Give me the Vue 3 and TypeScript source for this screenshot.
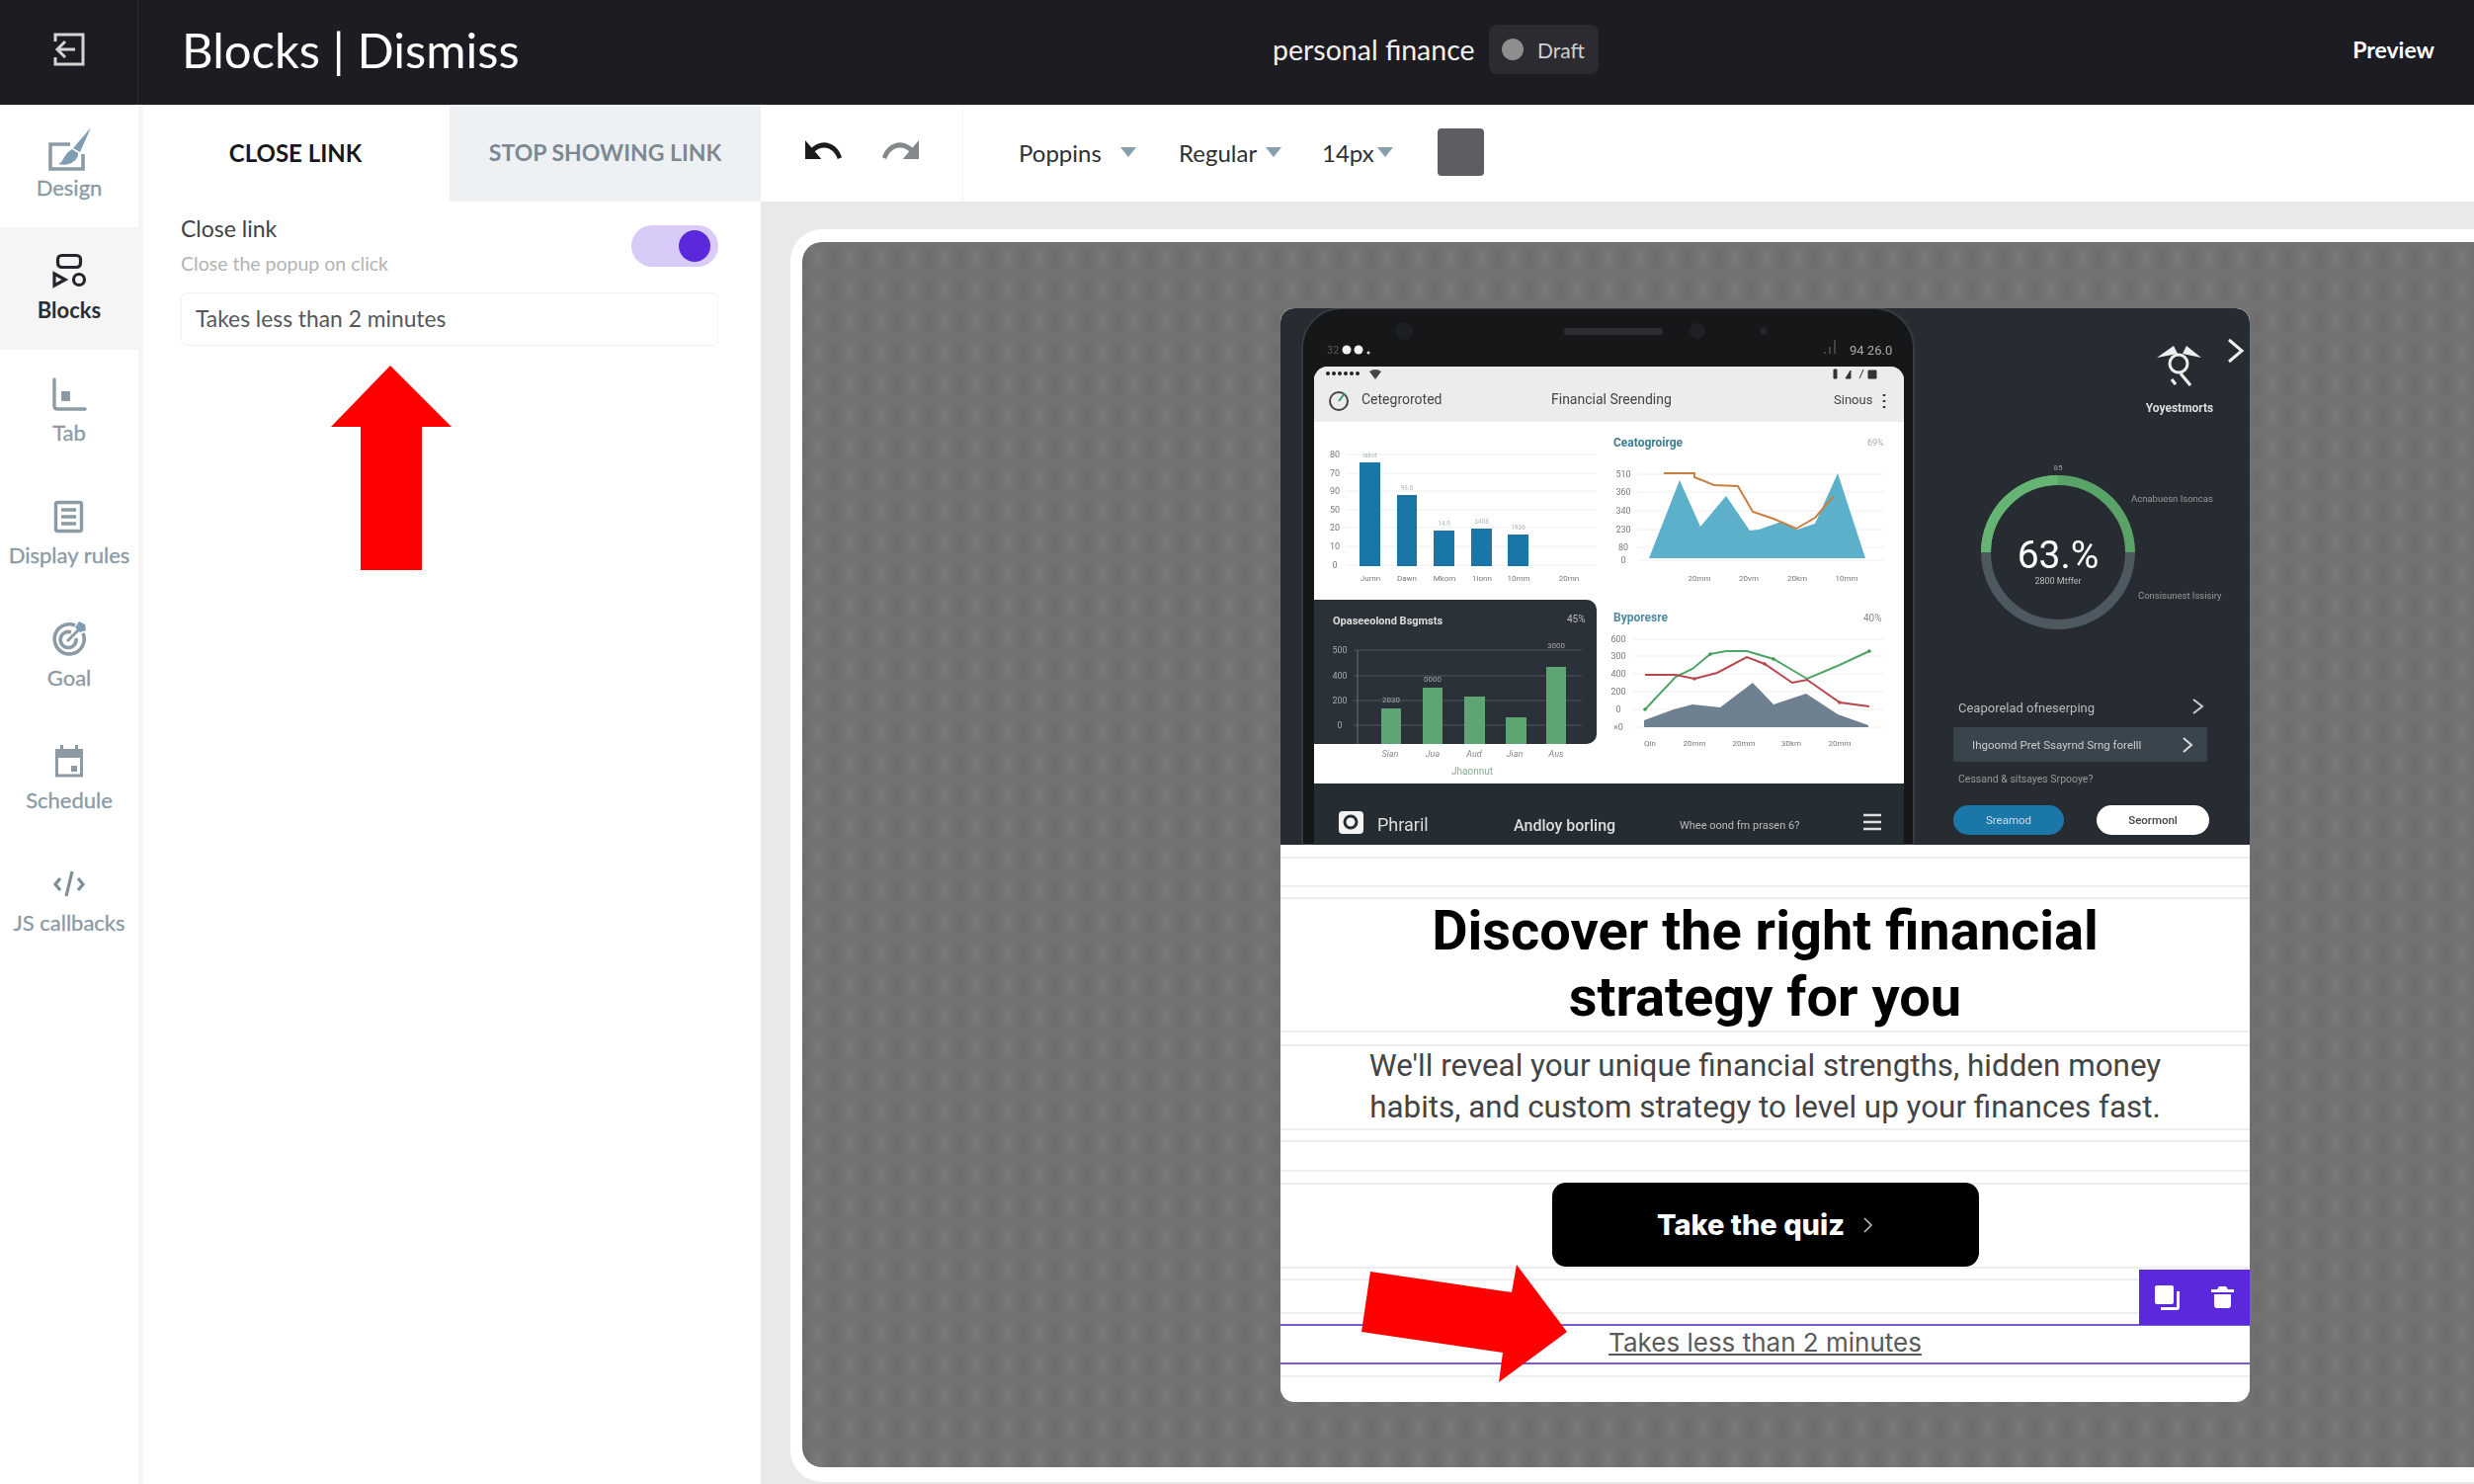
<script setup lang="ts">
interface NavItem {
  key: string;
  label: string;
}

const navItems: NavItem[] = [
  { key: "design", label: "Design" },
  { key: "blocks", label: "Blocks" },
  { key: "tab", label: "Tab" },
  { key: "rules", label: "Display rules" },
  { key: "goal", label: "Goal" },
  { key: "schedule", label: "Schedule" },
  { key: "js", label: "JS callbacks" },
];

const toolbarSelects = [
  { label: "Poppins", textWidth: 103, width: 162 },
  { label: "Regular", textWidth: 88, width: 145 },
  { label: "14px", textWidth: 56, width: 117 },
];

// Chart data is in the illustration's own coordinates
const blueBars = [
  { x: 80, top: 156, w: 21, note: "Iakot" },
  { x: 118, top: 189, w: 20, note: "98.0" },
  { x: 155, top: 225, w: 21, note: "14.9" },
  { x: 193, top: 223, w: 21, note: "3408" },
  { x: 230, top: 229, w: 21, note: "1936" },
];
const greenBars = [
  { x: 102, top: 405, w: 20 },
  { x: 144, top: 384, w: 20 },
  { x: 186, top: 393, w: 21 },
  { x: 228, top: 414, w: 21 },
  { x: 269, top: 363, w: 20 },
];
const blueTicks = [
  { t: "80", y: 148 },
  { t: "70", y: 167 },
  { t: "90", y: 185 },
  { t: "50", y: 204 },
  { t: "20", y: 222 },
  { t: "10", y: 241 },
  { t: "0", y: 260 },
];
const areaTicks = [
  { t: "510", y: 168 },
  { t: "360", y: 186 },
  { t: "340", y: 205 },
  { t: "230", y: 224 },
  { t: "80", y: 242 },
  { t: "0", y: 255 },
];
const lineTicks = [
  { t: "600", y: 335 },
  { t: "300", y: 352 },
  { t: "400", y: 370 },
  { t: "200", y: 388 },
  { t: "0", y: 406 },
  { t: "×0", y: 424 },
];
const redPoints = "369,371 400,371 419,375 442,369 472,353 490,360 518,379 533,376 566,399 596,403";
const greenPoints = "369,406 400,373 417,365 435,350 451,347 472,347 499,355 533,375 566,361 596,347";
const orangePoints = "388,167 419,167 419,171 439,179 463,180 478,206 499,213 522,223 541,212 560,190";

const toDots = (points: string) =>
  points.split(" ").map((p) => {
    const [cx, cy] = p.split(",").map(Number);
    return { cx, cy };
  });
</script>

<template>
  <div class="app">
    <header class="topbar">
      <div class="back">
        <svg width="34" height="34" viewBox="0 0 34 34" fill="none" stroke="#d4d4d4" stroke-width="3">
          <path d="M3 9V2h28v30H3v-7" />
          <path d="M23 17H6M13 9l-8 8 8 8" />
        </svg>
      </div>
      <h1 class="title">Blocks | Dismiss</h1>
      <span class="project">personal finance</span>
      <span class="draft"><i class="draft-dot"></i>Draft</span>
      <span class="preview">Preview</span>
    </header>

    <div class="main">
      <nav class="sidebar">
        <div v-for="item in navItems" :key="item.key" class="nav-item" :class="{ active: item.key === 'blocks' }">
          <svg v-if="item.key === 'design'" class="nav-icon" viewBox="0 0 44 44">
            <path d="M23 17H3v25h33V27" fill="none" stroke="#8c9aa4" stroke-width="3.6" />
            <path d="M44 0 33 25l-7-4z" fill="#7f9db3" />
            <path d="M11 37c5-1 5-10 14-15l6 4c1 7-9 14-20 11z" fill="#7f9db3" />
          </svg>
          <svg v-else-if="item.key === 'blocks'" class="nav-icon" viewBox="0 0 44 44" fill="none" stroke="#23262b" stroke-width="3.2">
            <rect x="10.5" y="5.5" width="23" height="12" rx="4" />
            <path d="M7 24v12l11-6z" />
            <circle cx="32" cy="30" r="5.5" />
          </svg>
          <svg v-else-if="item.key === 'tab'" class="nav-icon" viewBox="0 0 44 44">
            <path d="M7 7v27c0 2 1 3 3 3h28" fill="none" stroke="#8c9aa4" stroke-width="3.4" stroke-linecap="round" />
            <rect x="14" y="19" width="9" height="10" rx="1" fill="#8c9aa4" />
          </svg>
          <svg v-else-if="item.key === 'rules'" class="nav-icon" viewBox="0 0 44 44" fill="none" stroke="#8c9aa4" stroke-width="3.4">
            <rect x="8.5" y="7.5" width="26" height="29" rx="2" />
            <path d="M14 15h15M14 22h15M14 29h15" />
          </svg>
          <svg v-else-if="item.key === 'goal'" class="nav-icon" viewBox="0 0 44 44" fill="none" stroke="#8c9aa4" stroke-width="3.6">
            <path d="M28 8a15 15 0 1 0 8 8" />
            <path d="M24 15a8 8 0 1 0 5 6" />
            <path d="M20 24 32 12" stroke-width="3" />
            <path d="m32 4 6 3 1 6-6 2-5-5z" fill="#7f9db3" stroke="none" />
          </svg>
          <svg v-else-if="item.key === 'schedule'" class="nav-icon" viewBox="0 0 44 44">
            <path d="M13 5h3v4h12V5h3v4h5v9H8V9h5z" fill="#8c9aa4" />
            <path d="M9.5 15v21h25V15" fill="none" stroke="#8c9aa4" stroke-width="3" />
            <rect x="24" y="26" width="6" height="6" fill="#8c9aa4" />
          </svg>
          <svg v-else class="nav-icon" viewBox="0 0 44 44" fill="none" stroke="#7e8e99" stroke-width="3.2">
            <path d="m13 16-5 6 5 6M31 16l5 6-5 6M25 9l-6 25" />
          </svg>
          <span class="nav-label">{{ item.label }}</span>
        </div>
      </nav>

      <section class="panel">
        <div class="tabs">
          <div class="tab current">CLOSE LINK</div>
          <div class="tab">STOP SHOWING LINK</div>
        </div>
        <div class="panel-body">
          <div class="field-head">
            <div>
              <div class="field-title">Close link</div>
              <div class="field-hint">Close the popup on click</div>
            </div>
            <div class="toggle"><i class="knob"></i></div>
          </div>
          <div class="text-input"><span>Takes less than 2 minutes</span></div>
        </div>
      </section>

      <section class="workspace">
        <div class="toolbar">
          <div class="history">
            <svg class="hist-icon" viewBox="2 6 21 11" preserveAspectRatio="none">
              <path d="M12.5 8c-2.65 0-5.05.99-6.9 2.6L2 7v9h9l-3.62-3.62c1.39-1.16 3.16-1.88 5.12-1.88 3.54 0 6.55 2.31 7.6 5.5l2.37-.78C21.08 11.03 17.15 8 12.5 8z" fill="#1c1c1f" />
            </svg>
            <svg class="hist-icon" viewBox="2 6 21 11" preserveAspectRatio="none">
              <path d="M12.5 8c2.65 0 5.05.99 6.9 2.6L23 7v9h-9l3.62-3.62C16.23 11.22 14.46 10.5 12.5 10.5c-3.54 0-6.55 2.31-7.6 5.5l-2.37-.78C3.92 11.03 7.85 8 12.5 8z" fill="#85888b" />
            </svg>
          </div>
          <div class="format">
            <div v-for="sel in toolbarSelects" :key="sel.label" class="select" :style="{ width: sel.width + 'px' }">
              <span :style="{ width: sel.textWidth + 'px' }">{{ sel.label }}</span>
              <i class="caret"></i>
            </div>
            <div class="swatch"></div>
          </div>
        </div>

        <div class="canvas">
          <div class="frame">
            <div class="stage">
              <div class="popup">
                <svg class="shot" viewBox="0 0 981 543" width="981" height="543">
                  <g class="blurred">
                    <path d="M0 14a14 14 0 0 1 14-14h953a14 14 0 0 1 14 14v529H0z" fill="#272c33" />
                    <path d="M22 543V40A40 40 0 0 1 62 0h539a40 40 0 0 1 40 40v503z" fill="#151719" stroke="#363b3f" stroke-width="2" />
                    <circle cx="125" cy="23" r="9" fill="#1d2022" />
                    <rect x="287" y="20" width="100" height="7" rx="3" fill="#2c2e31" />
                    <circle cx="422" cy="23" r="8" fill="#1f2124" />
                    <circle cx="489" cy="23" r="4" fill="#222427" />
                    <text x="47" y="46" class="t" font-size="11" fill="#555">32</text>
                    <circle cx="67" cy="42" r="4.5" fill="#f2f2f2" />
                    <circle cx="79" cy="42" r="4.5" fill="#f2f2f2" />
                    <circle cx="89" cy="45" r="1.5" fill="#ddd" />
                    <path d="M550 46h2v-2h-2zM555 46h2v-7h-2zM560 46h2V32h-2z" fill="#444" />
                    <text x="576" y="47" class="t" font-size="13" fill="#aaa">94 26.0</text>

                    <!-- phone screen -->
                    <path d="M34 73a14 14 0 0 1 14-14h569a14 14 0 0 1 14 14v408H34z" fill="#fff" />
                    <path d="M34 73a14 14 0 0 1 14-14h569a14 14 0 0 1 14 14v42H34z" fill="#ececec" />
                    <circle v-for="n in 6" :key="n" :cx="42 + n * 6" cy="66" r="2" fill="#222" />
                    <path d="M90 64q6-4 12 0l-6 8z" fill="#444" />
                    <path d="M560 62h3v9h-3zM572 71l5-8v8zM586 71l4-9M595 63h8v8h-8z" fill="#333" stroke="#333" />
                    <circle cx="59" cy="94" r="9" fill="none" stroke="#444" stroke-width="2" />
                    <path d="M59 94l6-8" stroke="#3a9a6c" stroke-width="2" />
                    <text x="82" y="97" class="t" font-size="14" fill="#444">Cetegroroted</text>
                    <text x="274" y="97" class="t" font-size="14" fill="#444">Financial Sreending</text>
                    <text x="560" y="97" class="t" font-size="13" fill="#444">Sinous</text>
                    <path d="M611 87v2M611 93v2M611 99v2" stroke="#333" stroke-width="2.5" />

                    <!-- blue bars -->
                    <g v-for="tick in blueTicks" :key="tick.t + tick.y">
                      <text x="55" :y="tick.y + 3" class="t" text-anchor="middle" font-size="9" fill="#777">{{ tick.t }}</text>
                      <line x1="66" x2="320" :y1="tick.y" :y2="tick.y" stroke="#eee" />
                    </g>
                    <g v-for="bar in blueBars" :key="bar.x">
                      <rect :x="bar.x" :y="bar.top" :width="bar.w" :height="261 - bar.top" fill="#1a76a6" />
                      <text :x="bar.x + bar.w / 2" :y="bar.top - 5" class="t" text-anchor="middle" font-size="6.5" fill="#a9b9c0">{{ bar.note }}</text>
                    </g>
                    <text v-for="(x, i) in [91, 128, 166, 204, 241, 292]" :key="x" :x="x" y="276" class="t" text-anchor="middle" font-size="8" fill="#777">{{ ["Jumn", "Dawn", "Mkom", "1ionn", "10mm", "20mn"][i] }}</text>

                    <!-- area chart -->
                    <text x="337" y="140" class="t" font-size="12" font-weight="700" fill="#3e7d94">Ceatogroirge</text>
                    <text x="594" y="139" class="t" font-size="9" fill="#aaa">69%</text>
                    <g v-for="tick in areaTicks" :key="tick.t">
                      <text x="347" :y="tick.y + 3" class="t" text-anchor="middle" font-size="9" fill="#777">{{ tick.t }}</text>
                      <line x1="362" x2="611" :y1="tick.y" :y2="tick.y" stroke="#eee" />
                    </g>
                    <polygon points="373,253 404,174 425,221 451,190 475,225 484,224 507,216 523,224 541,218 564,167 592,253" fill="#5cb0ca" />
                    <polyline :points="orangePoints" fill="none" stroke="#c9803f" stroke-width="2" />
                    <text v-for="(x, i) in [424, 474, 523, 573]" :key="x" :x="x" y="276" class="t" text-anchor="middle" font-size="8" fill="#777">{{ ["20mm", "20vm", "20km", "10mm"][i] }}</text>

                    <!-- dark card -->
                    <path d="M34 295h276a10 10 0 0 1 10 10v126a10 10 0 0 1-10 10H34z" fill="#2a3138" />
                    <text x="53" y="320" class="t" font-size="11" font-weight="700" fill="#ddd">Opaseeolond Bsgmsts</text>
                    <text x="290" y="318" class="t" font-size="10" fill="#bbb">45%</text>
                    <line v-for="y in [346, 372, 397, 422]" :key="y" x1="74" x2="305" :y1="y" :y2="y" stroke="#4e565d" />
                    <line x1="78" x2="78" y1="346" y2="441" stroke="#6a7279" />
                    <text v-for="(y, i) in [346, 372, 397, 422]" :key="'t' + y" x="60" :y="y + 3" class="t" text-anchor="middle" font-size="9" fill="#aaa">{{ ["500", "400", "200", "0"][i] }}</text>
                    <rect v-for="bar in greenBars" :key="bar.x" :x="bar.x" :y="bar.top" :width="bar.w" :height="441 - bar.top" fill="#5fa573" />
                    <text x="112" y="399" class="t" text-anchor="middle" font-size="8" fill="#aaa">2030</text>
                    <text x="154" y="378" class="t" text-anchor="middle" font-size="8" fill="#aaa">0000</text>
                    <text x="279" y="344" class="t" text-anchor="middle" font-size="8" fill="#aaa">3000</text>
                    <text v-for="(x, i) in [111, 154, 196, 237, 279]" :key="x" :x="x" y="454" class="t" text-anchor="middle" font-size="9" font-style="italic" fill="#888">{{ ["Sian", "Jua", "Aud", "Jian", "Aus"][i] }}</text>
                    <text x="194" y="472" class="t" text-anchor="middle" font-size="10" fill="#7fb08f">Jhaonnut</text>

                    <!-- line chart -->
                    <text x="337" y="317" class="t" font-size="12" font-weight="700" fill="#4f8aa2">Byporesre</text>
                    <text x="590" y="317" class="t" font-size="10" fill="#888">40%</text>
                    <g v-for="tick in lineTicks" :key="tick.t">
                      <text x="342" :y="tick.y + 3" class="t" text-anchor="middle" font-size="9" fill="#777">{{ tick.t }}</text>
                      <line x1="356" x2="611" :y1="tick.y" :y2="tick.y" stroke="#f0f0f0" />
                    </g>
                    <polygon points="368,417 398,406 417,401 445,404 478,379 499,401 532,390 564,411 595,422 595,424 368,424" fill="#6f8090" />
                    <polyline :points="greenPoints" fill="none" stroke="#4fa565" stroke-width="2" />
                    <polyline :points="redPoints" fill="none" stroke="#b9454f" stroke-width="2" />
                    <circle v-for="d in toDots(greenPoints).filter((_, i) => i % 3 === 0)" :key="'g' + d.cx" :cx="d.cx" :cy="d.cy" r="1.8" fill="#3f9a58" />
                    <circle v-for="d in toDots(redPoints).filter((_, i) => i % 3 === 2)" :key="'r' + d.cx" :cx="d.cx" :cy="d.cy" r="1.8" fill="#b9454f" />
                    <text v-for="(x, i) in [374, 419, 469, 517, 566]" :key="x" :x="x" y="443" class="t" text-anchor="middle" font-size="8" fill="#777">{{ ["Qin", "20mm", "20mm", "30km", "20mm"][i] }}</text>

                    <!-- phone bottom bar -->
                    <rect x="34" y="481" width="597" height="62" fill="#252c32" />
                    <rect x="59" y="509" width="25" height="23" rx="4" fill="#f4f4f4" />
                    <circle cx="71" cy="520" r="6" fill="none" stroke="#252c32" stroke-width="3" />
                    <text x="98" y="529" class="t" font-size="18" fill="#ddd">Phraril</text>
                    <text x="236" y="529" class="t" font-size="16" font-weight="500" fill="#ddd">Andloy borling</text>
                    <text x="404" y="527" class="t" font-size="11" fill="#bbb">Whee oond fm prasen 6?</text>
                    <path d="M590 513h18M590 520h18M590 527h18" stroke="#ddd" stroke-width="2.5" />

                    <!-- right side panel -->
                    <path d="M960 32l13 11-13 11" fill="none" stroke="#f0f0f0" stroke-width="3" />
                    <circle cx="909" cy="56" r="9" fill="none" stroke="#eee" stroke-width="3" />
                    <path d="M887 50l17-12 4 8zM932 50l-15-12-4 8z" fill="#eee" />
                    <path d="M911 66l10 12M902 72l4 5" stroke="#eee" stroke-width="3.2" />
                    <text x="910" y="105" class="t" text-anchor="middle" font-size="12" font-weight="700" fill="#ddd">Yoyestmorts</text>
                    <path d="M714 247a73 73 0 0 1 146 0" fill="none" stroke="#5aa368" stroke-width="10" />
                    <path d="M714 247a73 73 0 0 1 73-73" fill="none" stroke="#65b473" stroke-width="10" />
                    <path d="M714 247a73 73 0 0 0 146 0" fill="none" stroke="#4d5860" stroke-width="10" />
                    <text x="787" y="263" class="t" text-anchor="middle" font-size="39" fill="#fff">63.%</text>
                    <text x="787" y="279" class="t" text-anchor="middle" font-size="9" fill="#bbb">2800 Mtffer</text>
                    <text x="787" y="164" class="t" text-anchor="middle" font-size="8" fill="#999">85</text>
                    <text x="861" y="196" class="t" font-size="9.5" fill="#999">Acnabuesn Isoncas</text>
                    <text x="868" y="294" class="t" font-size="9.5" fill="#999">Consisunest Issisiry</text>
                    <text x="686" y="409" class="t" font-size="13" fill="#bbb">Ceaporelad ofneserping</text>
                    <path d="M924 396l9 7-9 7" fill="none" stroke="#ccc" stroke-width="2" />
                    <rect x="681" y="424" width="257" height="35" rx="2" fill="#3a444c" />
                    <text x="700" y="446" class="t" font-size="11.5" fill="#ccc">Ihgoomd Pret Ssayrnd Srng forelll</text>
                    <path d="M914 435l8 7-8 7" fill="none" stroke="#ddd" stroke-width="2" />
                    <text x="686" y="480" class="t" font-size="10.5" fill="#999">Cessand &amp; sitsayes Srpooye?</text>
                    <rect x="681" y="503" width="112" height="30" rx="15" fill="#1b77a8" />
                    <text x="737" y="522" class="t" text-anchor="middle" font-size="11.5" fill="#cde">Sreamod</text>
                    <rect x="826" y="503" width="114" height="30" rx="15" fill="#fff" />
                    <text x="883" y="522" class="t" text-anchor="middle" font-size="11.5" font-weight="500" fill="#444">Seormonl</text>
                  </g>
                </svg>

                <div class="blocks">
                  <div class="guide b-top"></div>
                  <div class="guide b-heading">
                    <h2 class="headline">Discover the right financial<br />strategy for you</h2>
                  </div>
                  <div class="guide b-desc">
                    <p class="copy">We'll reveal your unique financial strengths, hidden money<br />habits, and custom strategy to level up your finances fast.</p>
                  </div>
                  <div class="guide b-gap"></div>
                  <div class="guide b-cta">
                    <div class="cta">
                      <span>Take the quiz</span>
                      <svg width="11" height="20" viewBox="0 0 11 20" fill="none" stroke="#bbb" stroke-width="1.6"><path d="M2 3l7 7-7 7" /></svg>
                    </div>
                  </div>
                  <div class="guide b-gap2"></div>
                  <div class="b-link"><span class="link-text">Takes less than 2 minutes</span></div>
                  <div class="b-end"></div>
                </div>

                <div class="block-tools">
                  <svg width="26" height="25" viewBox="0 0 26 25" fill="#fff">
                    <rect x="0" y="0" width="19" height="19" rx="2" />
                    <path d="M22 6h3v16c0 2-1 3-3 3H6v-3h16z" />
                  </svg>
                  <svg width="23" height="22" viewBox="0 0 23 22" fill="#fff">
                    <path d="M8 0h7l2 3h6v3H0V3h6zM3 8h17v11c0 2-1 3-3 3H6c-2 0-3-1-3-3z" />
                  </svg>
                </div>
              </div>
            </div>
          </div>
        </div>
      </section>

      <!-- red callouts drawn on top of the capture -->
      <svg class="callouts" viewBox="0 0 2504 1396" width="2504" height="1396">
        <polygon points="395,264 335,326 365,326 365,471 427,471 427,326 457,326" fill="#fe0000" />
        <polygon points="1387,1181 1530,1202 1535,1174 1586,1242 1517,1293 1521,1263 1378,1242" fill="#fe0000" />
      </svg>
    </div>
  </div>
</template>

<style scoped>
.app {
  width: 2504px;
  height: 1502px;
  overflow: hidden;
  display: flex;
  flex-direction: column;
  font-family: "Lato", "Open Sans", sans-serif;
  background: #fff;
}

.topbar {
  height: 106px;
  flex: none;
  display: flex;
  align-items: center;
  background: #1c1c22;
  color: #fff;
}

.back {
  width: 140px;
  height: 106px;
  display: flex;
  align-items: center;
  justify-content: center;
  border-right: 1px solid #2a2a30;
  box-sizing: border-box;
  padding-bottom: 6px;
}

.title {
  margin: 0 0 6px 44px;
  width: 1104px;
  font-size: 49px;
  font-weight: 400;
  white-space: nowrap;
}

.project {
  margin-bottom: 6px;
  font-size: 28.5px;
  color: #f1f1f1;
  width: 219px;
  white-space: nowrap;
}

.draft {
  display: flex;
  align-items: center;
  height: 50px;
  width: 111px;
  padding-left: 13px;
  box-sizing: border-box;
  margin-bottom: 6px;
  border-radius: 8px;
  background: #2b2b31;
  font-size: 21px;
  color: #d0d0d0;
}

.draft-dot {
  width: 22px;
  height: 22px;
  border-radius: 50%;
  background: #8e8e8e;
  margin-right: 14px;
}

.preview {
  margin-left: auto;
  margin-right: 40px;
  font-size: 23px;
  font-weight: 700;
  margin-bottom: 6px;
}

.main {
  flex: 1;
  display: flex;
  position: relative;
  min-height: 0;
}

.sidebar {
  width: 145px;
  flex: none;
  box-sizing: border-box;
  border-right: 5px solid #f5f5f5;
}

.nav-item {
  height: 124px;
  display: flex;
  flex-direction: column;
  align-items: center;
  padding-top: 23px;
  box-sizing: border-box;
  color: #8a9aa5;
}

.nav-icon {
  width: 44px;
  height: 44px;
}

.nav-label {
  margin-top: 5px;
  font-size: 22px;
  line-height: 24px;
  white-space: nowrap;
  -webkit-text-stroke: 0.3px currentColor;
}

.nav-item.active {
  background: #f5f5f5;
  color: #2a2d31;
  font-weight: 700;
}

.nav-item.active .nav-label {
  -webkit-text-stroke: 0;
}

.panel {
  width: 625px;
  flex: none;
  background: #fff;
}

.tabs {
  display: flex;
  height: 98px;
}

.tab {
  width: 315px;
  padding-bottom: 2px;
  box-sizing: border-box;
  display: flex;
  align-items: center;
  justify-content: center;
  background: #edf1f3;
  color: #7d8992;
  font-size: 23px;
  font-weight: 700;
  white-space: nowrap;
}

.tab.current {
  width: 310px;
  padding-right: 2px;
  background: #fff;
  color: #17181b;
  font-size: 24px;
}

.panel-body {
  padding: 12px 43px 0 38px;
}

.field-head {
  display: flex;
  justify-content: space-between;
  align-items: flex-start;
}

.field-title {
  font-size: 23px;
  line-height: 30px;
  color: #404346;
}

.field-hint {
  margin-top: 8px;
  font-size: 19.5px;
  line-height: 26px;
  color: #b3b3b3;
}

.toggle {
  width: 88px;
  height: 42px;
  margin-top: 12px;
  border-radius: 21px;
  background: #d9cbf8;
  position: relative;
}

.knob {
  position: absolute;
  top: 5px;
  right: 8px;
  width: 32px;
  height: 32px;
  border-radius: 50%;
  background: #5b28dc;
}

.text-input {
  margin-top: 16px;
  height: 54px;
  box-sizing: border-box;
  padding: 0 0 3px 14px;
  display: flex;
  align-items: center;
  border: 1px solid #f2f2f2;
  border-radius: 6px;
  font-size: 22.8px;
  color: #55585b;
}

.workspace {
  flex: 1;
  min-width: 0;
  display: flex;
  flex-direction: column;
}

.toolbar {
  height: 98px;
  flex: none;
  display: flex;
  background: #fff;
}

.history {
  width: 205px;
  box-sizing: border-box;
  display: flex;
  gap: 39px;
  padding: 34px 0 0 45px;
  border-right: 1px solid #f3f3f3;
}

.hist-icon {
  width: 38px;
  height: 23px;
}

.format {
  display: flex;
  align-items: center;
  padding: 0 0 2px 56px;
}

.select {
  display: flex;
  align-items: center;
  font-size: 24px;
  color: #2e3033;
}

.select span {
  white-space: nowrap;
}

.caret {
  width: 0;
  height: 0;
  border-left: 8px solid transparent;
  border-right: 8px solid transparent;
  border-top: 10px solid #85a0ad;
}

.swatch {
  width: 47px;
  height: 48px;
  border-radius: 4px;
  background: #5e5e62;
}

.canvas {
  flex: 1;
  min-height: 0;
  display: flex;
  padding: 28px 0 2px 30px;
  background: #e9e9e9;
}

.frame {
  flex: 1;
  min-width: 0;
  display: flex;
  padding: 13px 0 15px 12px;
  background: #fff;
  border-radius: 32px 0 0 32px;
}

.stage {
  flex: 1;
  min-width: 0;
  padding: 67px 0 0 484px;
  border-radius: 20px 0 0 20px;
  background-color: #727272;
  background-image:
    radial-gradient(circle, rgba(255, 255, 255, 0.06), transparent 68%),
    radial-gradient(circle, rgba(0, 0, 0, 0.06), transparent 68%);
  background-size: 32px 32px;
  background-position: 0 0, 16px 0;
}

.popup {
  position: relative;
  width: 981px;
  height: 1107px;
  border-radius: 14px;
  overflow: hidden;
  background: #fff;
}

.shot {
  display: block;
}

.blurred {
  filter: blur(0.6px);
}

.t {
  font-family: "Roboto", sans-serif;
}

.blocks {
  padding-top: 12px;
  font-family: "Roboto", sans-serif;
}

.guide {
  box-sizing: border-box;
  border-top: 2px solid #eeeeee;
  border-bottom: 2px solid #eeeeee;
}

.b-top {
  height: 31px;
}

.b-heading {
  height: 137px;
  margin-top: 10px;
  padding-bottom: 2px;
  display: flex;
  align-items: center;
  justify-content: center;
}

.headline {
  margin: 0;
  font-size: 56px;
  line-height: 67px;
  font-weight: 700;
  color: #000;
  text-align: center;
}

.b-desc {
  height: 87px;
  margin-top: 12px;
  padding-bottom: 2px;
  display: flex;
  align-items: center;
  justify-content: center;
}

.copy {
  margin: 0;
  font-size: 31.4px;
  line-height: 42px;
  color: #444;
  text-align: center;
  white-space: nowrap;
}

.b-gap {
  height: 32px;
  margin-top: 10px;
}

.b-cta {
  height: 87px;
  margin-top: 11px;
  display: flex;
  justify-content: center;
}

.cta {
  width: 432px;
  height: 85px;
  margin-top: -2px;
  display: flex;
  align-items: center;
  justify-content: center;
  gap: 18px;
  border-radius: 14px;
  background: #000;
  color: #fff;
  font-family: "Inter", sans-serif;
  font-size: 29px;
  font-weight: 800;
}

.b-gap2 {
  height: 36px;
  margin-top: 10px;
}

.b-link {
  height: 41px;
  margin-top: 10px;
  padding-bottom: 4px;
  box-sizing: border-box;
  display: flex;
  align-items: center;
  justify-content: center;
  border-top: 2px solid #7a5ad8;
  border-bottom: 2px solid #7a5ad8;
}

.link-text {
  font-family: "Inter", sans-serif;
  font-size: 26px;
  color: #5a5a5a;
  text-decoration: underline;
}

.b-end {
  margin-top: 11px;
  border-top: 2px solid #eeeeee;
}

.block-tools {
  position: absolute;
  top: 973px;
  right: 0;
  width: 112px;
  height: 56px;
  display: flex;
  align-items: center;
  justify-content: space-around;
  background: #5b28dc;
}

.callouts {
  position: absolute;
  top: 0;
  left: 0;
  pointer-events: none;
}
</style>

<style>
html,
body {
  margin: 0;
  padding: 0;
}
</style>
